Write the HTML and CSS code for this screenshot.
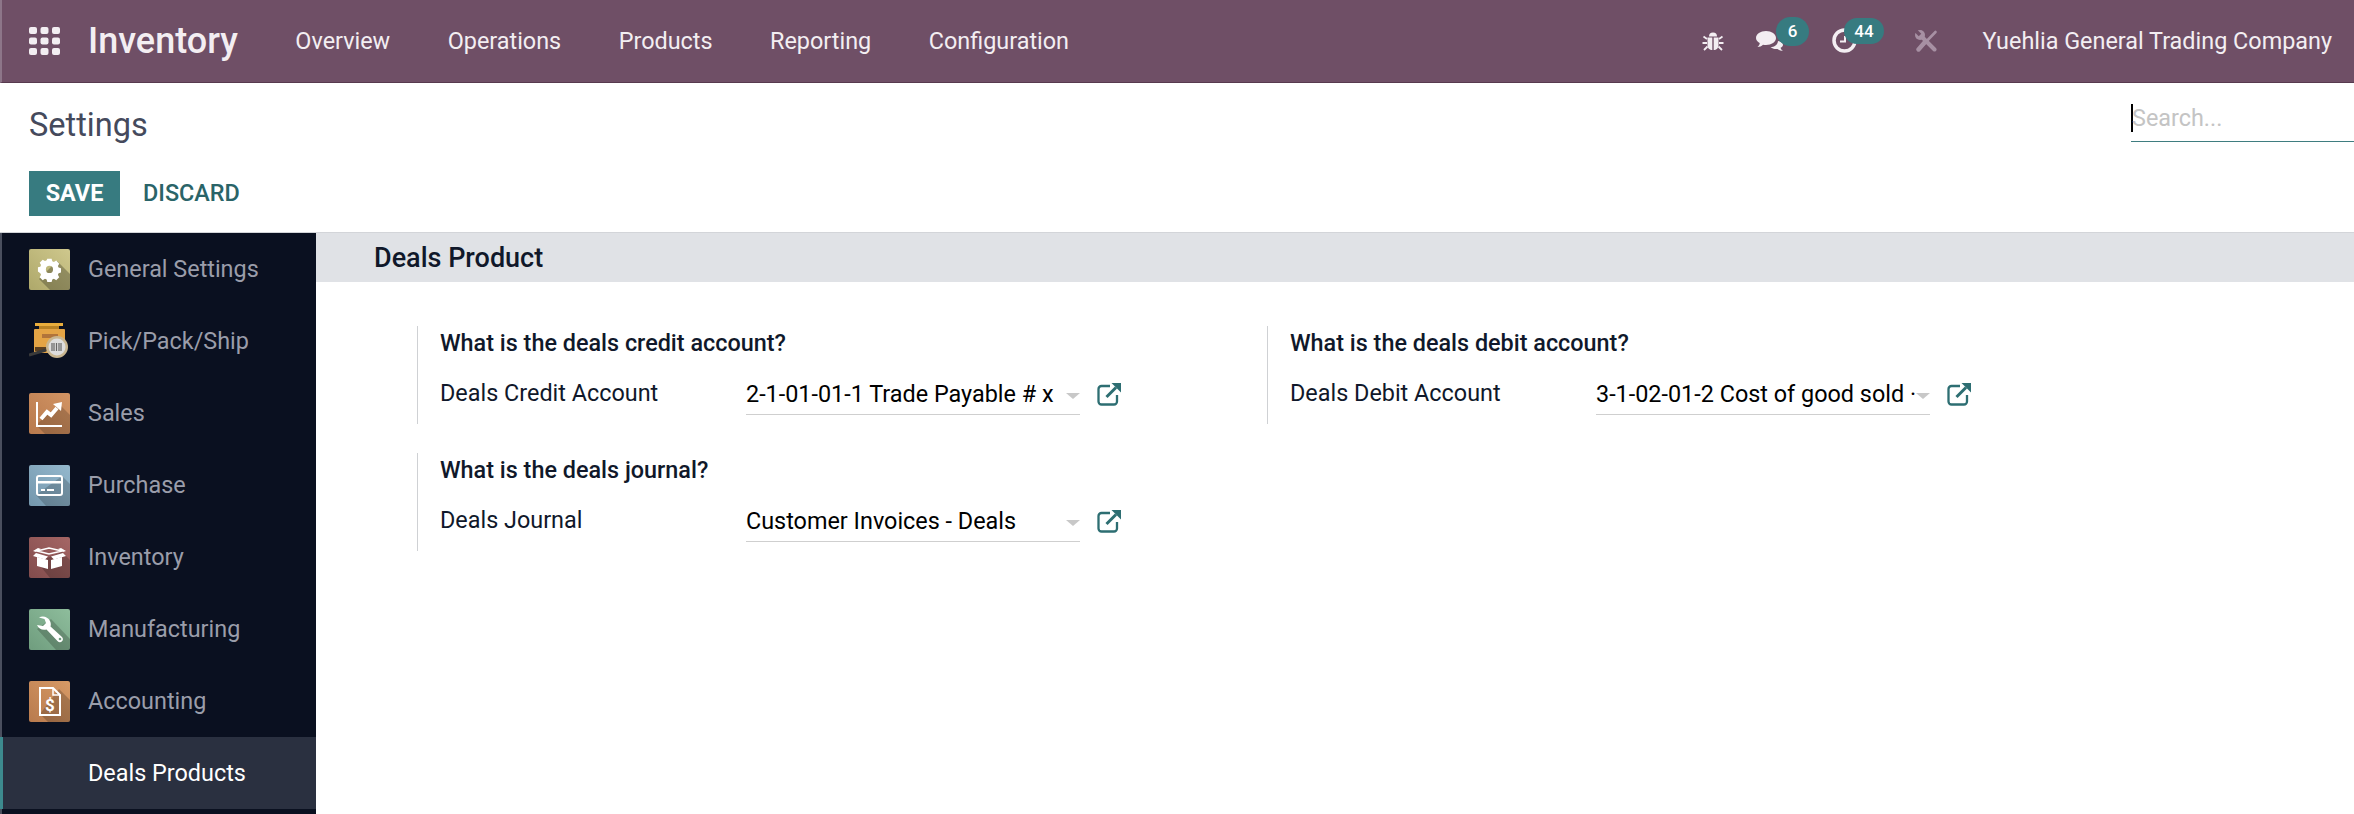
FILE: index.html
```html
<!DOCTYPE html>
<html lang="en">
<head>
<meta charset="utf-8">
<title>Settings</title>
<link rel="stylesheet" href="styles.css">
</head>
<body>
<header class="navbar">
  <svg class="apps" viewBox="0 0 31 28"><g fill="#f3eef2"><rect x="0" y="0" width="8" height="7" rx="2"/><rect x="11.500" y="0" width="8" height="7" rx="2"/><rect x="23" y="0" width="8" height="7" rx="2"/><rect x="0" y="10.500" width="8" height="7" rx="2"/><rect x="11.500" y="10.500" width="8" height="7" rx="2"/><rect x="23" y="10.500" width="8" height="7" rx="2"/><rect x="0" y="21" width="8" height="7" rx="2"/><rect x="11.500" y="21" width="8" height="7" rx="2"/><rect x="23" y="21" width="8" height="7" rx="2"/></g></svg>
  <span class="brand">Inventory</span>
  <nav class="menu">
    <span>Overview</span><span>Operations</span><span>Products</span><span>Reporting</span><span>Configuration</span>
  </nav>
  <div class="systray">
    <svg class="tray-bug" viewBox="0 0 22 22"><g fill="#f3eef2"><path d="M7 6.500a4 4 0 0 1 8 0z"/><path d="M5.500 7.500h4.800V20c-2.800 0-4.800-2-4.800-5z"/><path d="M11.700 7.500h4.800V15c0 3-2 5-4.800 5z"/></g><path d="M5 9 1.500 6.500M17 9l3.500-2.500M5 13H.5M17 13h4.500M5.500 16.500 2 20M16.500 16.500 20 20" stroke="#f3eef2" stroke-width="1.800" fill="none"/></svg>
    <span class="tray-item tray-chat">
      <svg class="chat-ico" viewBox="0 0 28 22"><path fill="#f3eef2" d="M10 1c5.500 0 10 3 10 7s-4.500 7-10 7c-1 0-2 0-3-.3C5.500 16 3.500 17 1.500 17 3 15.700 3.800 14.300 3.700 13 1.400 11.800 0 10 0 8c0-4 4.500-7 10-7z"/><path fill="#f3eef2" d="M22 11c3 .5 5 2 5 3.800 0 1.300-1 2.400-2.400 3 .1 1 .8 2.200 2.400 3.200-2 0-4-.8-5.500-2-3 .3-5.500-.5-7-2 4 0 7-2 7.500-6z"/></svg>
      <span class="badge badge-chat">6</span>
    </span>
    <span class="tray-item tray-clock">
      <svg class="clock-ico" viewBox="0 0 25 25"><circle cx="12.500" cy="12.500" r="10.500" fill="none" stroke="#f3eef2" stroke-width="3.500"/><path d="M8 13.500h5V8" fill="none" stroke="#f3eef2" stroke-width="2"/></svg>
      <span class="badge badge-clock">44</span>
    </span>
    <svg class="tray-tools" viewBox="0 0 23 22"><path d="M20.500 2 3.500 19.500" fill="none" stroke="#a790a3" stroke-width="2.600" stroke-linecap="round"/><path d="M10 12 3.500 19.500" fill="none" stroke="#a790a3" stroke-width="4.400" stroke-linecap="round"/><circle cx="5" cy="5" r="5" fill="#a790a3"/><path d="M5 5 19.500 19.500" fill="none" stroke="#a790a3" stroke-width="4" stroke-linecap="round"/><path d="M-1 -1 5 5" fill="none" stroke="#6f4f66" stroke-width="3.500"/></svg>
    <span class="company">Yuehlia General Trading Company</span>
  </div>
</header>

<section class="control">
  <div class="control-top">
    <h1 class="page-title">Settings</h1>
    <div class="search"><span class="caret"></span><span class="search-ph">Search...</span></div>
  </div>
  <div class="buttons">
    <button class="btn-save" type="button">SAVE</button>
    <button class="btn-discard" type="button">DISCARD</button>
  </div>
</section>

<div class="body">
  <aside class="sidebar">
    <div class="tab">
      <svg class="app-ico ico-gen" viewBox="0 0 41 41"><path d="M10 30 28 12l13 13v16H21z" fill="#000" opacity=".26"/><path fill-rule="evenodd" fill="#fff" d="M17.500 8h6l.9 3.600 2.300 1 3.200-1.900 4.200 4.200-1.900 3.200 1 2.300 3.300.9v6l-3.300.9-1 2.300 1.900 3.200-4.200 4.200-3.200-1.900-2.300 1-.9 3.300h-6l-.9-3.300-2.300-1-3.200 1.900-4.200-4.200 1.900-3.200-1-2.300L4.500 26v-6l3.300-.9 1-2.300-1.900-3.200 4.200-4.200 3.200 1.900 2.300-1zM20.500 18a5 5 0 1 0 0 10 5 5 0 0 0 0-10z" transform="translate(5.700 3.900) scale(.72)"/></svg>
      <span>General Settings</span>
    </div>
    <div class="tab">
      <svg class="app-ico-free" viewBox="0 0 41 36"><rect x="6" y="0" width="28" height="3" fill="#e9ad3c"/><rect x="10" y="3" width="20" height="4" fill="#b98224"/><rect x="5" y="6" width="31" height="24" rx="1" fill="#e4a445"/><rect x="13" y="11" width="16" height="4" fill="#b1743a"/><rect x="6" y="24" width="12" height="4" fill="#5c4020"/><path d="M0 32 17 27" stroke="#3a3a3a" stroke-width="3"/><circle cx="28" cy="24" r="11" fill="#c9b690"/><circle cx="28" cy="24" r="8.500" fill="#ddd"/><path d="M23 20v8M25 20v8M27.500 20v8M30 20v8M32 20v8" stroke="#666" stroke-width="1.200"/></svg>
      <span>Pick/Pack/Ship</span>
    </div>
    <div class="tab">
      <svg class="app-ico ico-sales" viewBox="0 0 41 41"><path d="M7 32 30 11l11 11v19H16z" fill="#000" opacity=".18"/><path d="M8 9v24h25" fill="none" stroke="#fff" stroke-width="2"/><path d="M12 26l6-7 4 3 6-7" fill="none" stroke="#fff" stroke-width="4"/><path d="M24 11l9-2-1 9z" fill="#fff"/></svg>
      <span>Sales</span>
    </div>
    <div class="tab">
      <svg class="app-ico ico-pur" viewBox="0 0 41 41"><path d="M7 30 33 11l8 8v22H17z" fill="#000" opacity=".18"/><rect x="8" y="11" width="25" height="19" rx="2" fill="none" stroke="#fff" stroke-width="2"/><rect x="8" y="16" width="25" height="2.500" fill="#fff"/><rect x="12" y="24" width="4" height="2" fill="#fff"/><rect x="18" y="24" width="7" height="2" fill="#fff"/></svg>
      <span>Purchase</span>
    </div>
    <div class="tab">
      <svg class="app-ico ico-inv" viewBox="0 0 41 41"><path d="M8 25 33 15l8 8v18H21z" fill="#000" opacity=".2"/><path d="M8 14 20 11l13 3-13 3z" fill="none" stroke="#fff" stroke-width="1.500"/><path d="M4 14l5-3 3 1-5 3zM37 14l-5-3-3 1 5 3z" fill="#fff"/><path d="M8 20l11 3v9L8 29zM33 20l-11 3v9l11-3z" fill="#fff"/><path d="M7 16l12 3.500-3 3L4 19zM34 16l-12 3.500 3 3 12-3.500z" fill="#fff"/></svg>
      <span>Inventory</span>
    </div>
    <div class="tab">
      <svg class="app-ico ico-man" viewBox="0 0 41 41"><path d="M8 20 22 10l19 20v11H27z" fill="#000" opacity=".2"/><path d="M10 8.500C14 6.500 19 8 21 12c1 2 1 4 .5 5.500L33 28c1.500 1.500 1 3.500 0 4.300-1 1-3 1.300-4.300 0L17.500 20.500c-4 1-8-.5-9.500-4.500L14 17l3-3-1.500-4z" fill="#fff"/><circle cx="31" cy="30" r="1.300" fill="#6f9f80"/></svg>
      <span>Manufacturing</span>
    </div>
    <div class="tab">
      <svg class="app-ico ico-acc" viewBox="0 0 41 41"><path d="M11 33 30 8l11 11v22H19z" fill="#000" opacity=".2"/><path d="M11 7h13l7 7v20H11z" fill="none" stroke="#fff" stroke-width="2"/><path d="M24 7v7h7" fill="none" stroke="#fff" stroke-width="1.500"/><text x="21" y="30" class="dollar" text-anchor="middle">$</text></svg>
      <span>Accounting</span>
    </div>
    <div class="tab tab-active"><span>Deals Products</span></div>
  </aside>

  <main class="content">
    <h2 class="section-bar">Deals Product</h2>
    <div class="settings">
      <div class="setting">
        <div class="setting-title">What is the deals credit account?</div>
        <div class="setting-row">
          <label class="setting-label">Deals Credit Account</label>
          <div class="field"><span class="field-val">2-1-01-01-1 Trade Payable # x</span><span class="drop"></span></div>
          <svg class="ext" viewBox="0 0 24 24"><path d="M13 4H4.500A3 3 0 0 0 1.500 7v12.500a3 3 0 0 0 3 3H17a3 3 0 0 0 3-3V13" fill="none" stroke="#2d6e72" stroke-width="2.300"/><path d="M9.500 15 19 5.500" stroke="#2d6e72" stroke-width="3" fill="none"/><path d="M14.500 1H24v9.500z" fill="#2d6e72"/></svg>
        </div>
      </div>
      <div class="setting">
        <div class="setting-title">What is the deals debit account?</div>
        <div class="setting-row">
          <label class="setting-label">Deals Debit Account</label>
          <div class="field"><span class="field-val">3-1-02-01-2 Cost of good sold ·</span><span class="drop"></span></div>
          <svg class="ext" viewBox="0 0 24 24"><path d="M13 4H4.500A3 3 0 0 0 1.500 7v12.500a3 3 0 0 0 3 3H17a3 3 0 0 0 3-3V13" fill="none" stroke="#2d6e72" stroke-width="2.300"/><path d="M9.500 15 19 5.500" stroke="#2d6e72" stroke-width="3" fill="none"/><path d="M14.500 1H24v9.500z" fill="#2d6e72"/></svg>
        </div>
      </div>
      <div class="setting">
        <div class="setting-title">What is the deals journal?</div>
        <div class="setting-row">
          <label class="setting-label">Deals Journal</label>
          <div class="field"><span class="field-val">Customer Invoices - Deals</span><span class="drop"></span></div>
          <svg class="ext" viewBox="0 0 24 24"><path d="M13 4H4.500A3 3 0 0 0 1.500 7v12.500a3 3 0 0 0 3 3H17a3 3 0 0 0 3-3V13" fill="none" stroke="#2d6e72" stroke-width="2.300"/><path d="M9.500 15 19 5.500" stroke="#2d6e72" stroke-width="3" fill="none"/><path d="M14.500 1H24v9.500z" fill="#2d6e72"/></svg>
        </div>
      </div>
    </div>
  </main>
</div>
</body>
</html>
```

FILE: styles.css
```css
* { box-sizing: border-box; }
html, body { margin: 0; padding: 0; height: 100%; overflow: hidden; background: #fff; }
body { font-family: Roboto, "Liberation Sans", sans-serif; font-size: 23.400px; color: #10182a; display: flex; flex-direction: column; }

.navbar { height: 83px; flex: none; background: #6f4f66; border-bottom: 1px solid #57394e; border-left: 2px solid #8d7689; display: flex; align-items: center; color: #f3eef2; padding-bottom: 1px; }
.apps { width: 31px; height: 28px; margin-left: 27px; flex: none; }
.brand { font-size: 36px; font-weight: 500; margin-left: 28px; }
.menu { display: flex; gap: 57.500px; margin-left: 57.500px; font-size: 23.400px; }
.systray { margin-left: auto; display: flex; align-items: center; padding-right: 22px; height: 100%; }
.tray-bug { width: 22px; height: 22px; flex: none; }
.tray-item { position: relative; display: block; flex: none; }
.tray-chat { width: 28px; height: 22px; margin-left: 32px; }
.chat-ico { width: 28px; height: 22px; display: block; }
.tray-clock { width: 25px; height: 25px; margin-left: 48px; }
.clock-ico { width: 25px; height: 25px; display: block; }
.badge { position: absolute; background: #377b80; color: #fff; font-size: 17px; font-weight: 500; display: flex; align-items: center; justify-content: center; }
.badge-chat { left: 20px; top: -13px; width: 33px; height: 29px; border-radius: 15px; }
.badge-clock { left: 12px; top: -10px; width: 40px; height: 26px; border-radius: 13px; }
.tray-tools { width: 23px; height: 22px; margin-left: 58px; flex: none; }
.company { font-size: 23.400px; margin-left: 44.500px; }

.control { flex: none; height: 150px; border-bottom: 1px solid #d3d5d9; padding-left: 29px; display: flex; flex-direction: column; background: #fff; }
.control-top { display: flex; justify-content: space-between; height: 88px; flex: none; }
.page-title { margin: 23px 0 0; font-size: 32.500px; font-weight: 400; line-height: 38px; color: #454a5c; }
.search { width: 223px; height: 41px; margin-top: 18px; border-bottom: 1px solid #3f7d80; display: flex; align-items: flex-start; position: relative; }
.caret { width: 2px; height: 28px; margin-top: 3px; background: #000; flex: none; }
.search-ph { color: #c4c4c4; font-size: 23.400px; line-height: 28px; margin-top: 3px; margin-left: -1px; }
.buttons { display: flex; align-items: flex-start; gap: 23px; }
.btn-save, .btn-discard { font-family: inherit; font-size: 23.400px; font-weight: 500; border: 0; cursor: pointer; }
.btn-save { width: 91px; height: 45px; background: #377b80; color: #fff; padding: 0 0 2px; font-weight: 700; }
.btn-discard { background: none; color: #2a6468; padding: 0 0 2px; height: 45px; }

.body { flex: 1; display: flex; min-height: 0; }
.sidebar { width: 316px; flex: none; background: #0a1020; border-left: 2px solid #4a4f5e; }
.tab { height: 72px; display: flex; align-items: center; padding-left: 27px; gap: 18px; color: #9a9daa; font-size: 23.400px; }
.app-ico { width: 41px; height: 41px; border-radius: 2px; flex: none; display: block; }
.app-ico-free { width: 41px; height: 36px; flex: none; display: block; }
.ico-gen { background: linear-gradient(45deg, #aea86a, #cfc88d); }
.ico-sales { background: linear-gradient(45deg, #b87a4d, #d29464); }
.ico-pur { background: linear-gradient(45deg, #7497ad, #94b8cd); }
.ico-inv { background: linear-gradient(45deg, #824c4c, #a56665); }
.ico-man { background: linear-gradient(45deg, #6f9d7e, #8ebd9c); }
.ico-acc { background: linear-gradient(45deg, #b87a4d, #d79a66); }
.dollar { font-family: Roboto, sans-serif; font-size: 17px; font-weight: 700; fill: #fff; }
.tab-active { background: #2a3040; color: #fff; border-left: 3px solid #3d8a8e; margin-left: -2px; padding-left: 85px; }

.content { flex: 1; min-width: 0; }
.section-bar { margin: 0; height: 49px; background: #e0e2e6; font-size: 27px; font-weight: 500; line-height: 50px; padding-left: 58px; color: #10182a; }
.settings { display: grid; grid-template-columns: 850px 850px; row-gap: 29px; padding: 44px 0 0 101px; }
.setting { height: 98px; border-left: 1px solid #cfd1d4; padding-left: 22px; }
.setting-title { font-size: 23.400px; font-weight: 500; line-height: 34px; color: #10182a; }
.setting-row { display: flex; align-items: flex-start; margin-top: 11px; }
.setting-label { width: 306px; flex: none; font-size: 23.400px; line-height: 44px; }
.field { width: 334px; height: 44px; flex: none; border-bottom: 1px solid #cfcfcf; display: flex; align-items: center; padding-top: 2px; position: relative; color: #000; }
.field-val { font-size: 23.400px; display: block; white-space: nowrap; }
.drop { position: absolute; right: 0; top: 22px; width: 0; height: 0; border-left: 7px solid transparent; border-right: 7px solid transparent; border-top: 6px solid #c8c8c8; }
.ext { width: 24px; height: 24px; flex: none; margin: 11px 0 0 17px; }
```
